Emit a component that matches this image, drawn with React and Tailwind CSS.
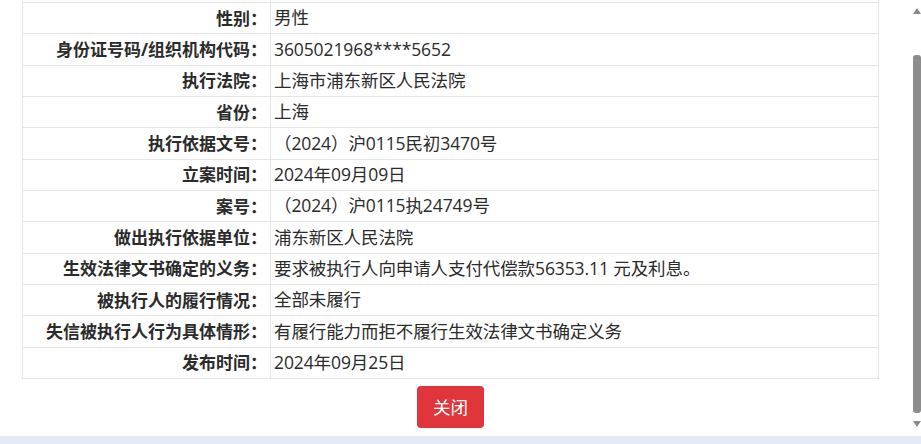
const rows = [
  ['性别', '男性'],
  ['身份证号码/组织机构代码', '3605021968****5652'],
  ['执行法院', '上海市浦东新区人民法院'],
  ['省份', '上海'],
  ['执行依据文号', '（2024）沪0115民初3470号'],
  ['立案时间', '2024年09月09日'],
  ['案号', '（2024）沪0115执24749号'],
  ['做出执行依据单位', '浦东新区人民法院'],
  ['生效法律文书确定的义务', '要求被执行人向申请人支付代偿款56353.11 元及利息。'],
  ['被执行人的履行情况', '全部未履行'],
  ['失信被执行人行为具体情形', '有履行能力而拒不履行生效法律文书确定义务'],
  ['发布时间', '2024年09月25日'],
]

export default function App() {
  return (
    <div
      className="w-[921px] h-[444px] overflow-hidden bg-white flex flex-col text-[#2b2b2b]"
      style={{ fontFamily: '"Open Sans", "Noto Sans CJK SC", sans-serif' }}
    >
      <div className="flex flex-1 min-h-0">
        {/* 内容区 */}
        <div className="w-[901px] flex flex-col items-center">
          <div className="w-[857px] border-x border-b border-[#e4e4e4]">
            <div className="grid grid-cols-[248px_1fr] h-[2px]">
              <div className="border-r border-[#e4e4e4]" />
              <div />
            </div>
            {rows.map(([label, value]) => (
              <div
                key={label}
                className="grid grid-cols-[248px_1fr] h-[31.33px] border-t border-[#e4e4e4] leading-none"
              >
                <div className="flex items-center justify-end pr-[3px] text-[17px] font-bold border-r border-[#e4e4e4] whitespace-nowrap">
                  {label}：
                </div>
                <div className="flex items-center pl-[3px] text-[17.5px] tracking-[-0.1px] whitespace-nowrap">{value}</div>
              </div>
            ))}
          </div>
          <button className="mt-[7px] w-[67px] h-[42px] rounded-[4px] bg-[#e0363b] text-white text-[17.5px]">
            关闭
          </button>
        </div>

        {/* 滚动条 */}
        <div className="flex-1" />
        <div className="w-[8px] flex flex-col items-center">
          <svg width="8" height="10" viewBox="0 0 8 10" className="mt-[6px]">
            <polygon points="4,2 8,8 0,8" fill="#8a8a8a" />
          </svg>
          <div className="mt-[39px] w-[8px] h-[358px] rounded-[3px] bg-[#8c8c8c]" />
          <svg width="8" height="10" viewBox="0 0 8 10" className="mt-[6px]">
            <polygon points="0,2 8,2 4,8" fill="#8a8a8a" />
          </svg>
        </div>
      </div>
      <div className="h-[8px] bg-[#e6eaf4]" />
    </div>
  )
}
